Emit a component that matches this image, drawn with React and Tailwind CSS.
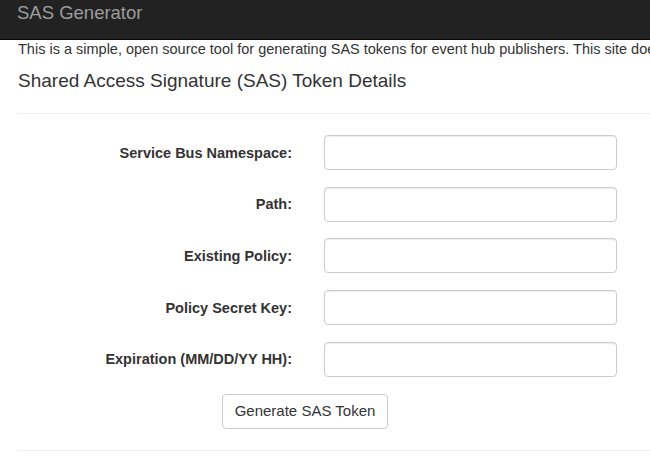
export default function App() {
  const fields = [
    "Service Bus Namespace:",
    "Path:",
    "Existing Policy:",
    "Policy Secret Key:",
    "Expiration (MM/DD/YY HH):",
  ];
  return (
    <div
      className="w-[650px] h-[467px] overflow-hidden bg-white text-[#333]"
      style={{ fontFamily: '"Liberation Sans", Arial, sans-serif' }}
    >
      <nav className="h-[40px] bg-[#222] border-b border-[#080808] px-[17px] pt-px">
        <span className="text-[18.5px] leading-[24px] text-[#9d9d9d] whitespace-nowrap">SAS Generator</span>
      </nav>
      <div className="pl-[18px]">
        <p className="text-[14.5px] leading-[18px] whitespace-nowrap">
          This is a simple, open source tool for generating SAS tokens for event hub publishers. This site does not store any of your data.
        </p>
        <h2 className="mt-[11px] text-[19px] leading-[24px] whitespace-nowrap">
          Shared Access Signature (SAS) Token Details
        </h2>
      </div>
      <div className="ml-[17px] mt-[20px] border-t border-[#eee]" />
      <form className="ml-[17px] mt-[21px] flex flex-col gap-[16.7px]">
        {fields.map((f) => (
          <div key={f} className="flex items-center">
            <label className="w-[275px] text-right text-[14.5px] font-bold leading-[18px] text-[#333] whitespace-nowrap">
              {f}
            </label>
            <input
              type="text"
              className="ml-[32px] w-[293px] h-[35px] rounded-[4px] border border-[#ccc] bg-white shadow-[inset_0_1px_1px_rgba(0,0,0,0.075)] outline-none"
            />
          </div>
        ))}
      </form>
      <div className="ml-[222px] mt-[17px]">
        <button
          type="button"
          className="w-[166px] h-[35px] rounded-[4px] border border-[#ccc] bg-white text-[15px] text-[#333] whitespace-nowrap"
        >
          Generate SAS Token
        </button>
      </div>
      <div className="ml-[17px] mt-[21px] border-t border-[#eee]" />
    </div>
  );
}
